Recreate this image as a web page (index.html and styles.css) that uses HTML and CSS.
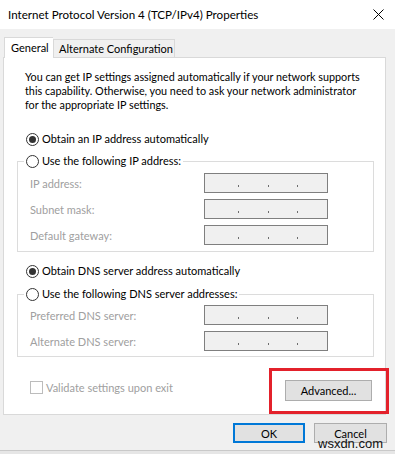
FILE: index.html
```html
<!DOCTYPE html>
<html>
<head>
<meta charset="utf-8">
<link rel="stylesheet" href="styles.css">
</head>
<body>
<div class="dialog">
  <div class="titlebar">
    <span class="title">Internet Protocol Version 4 (TCP/IPv4) Properties</span>
    <svg class="close" width="11" height="11" viewBox="0 0 11 11"><path d="M0.5 0.5 L10.5 10.5 M10.5 0.5 L0.5 10.5" stroke="#000" stroke-width="1"/></svg>
  </div>
  <div class="tabs">
    <div class="tab active">General</div>
    <div class="tab">Alternate Configuration</div>
  </div>
  <div class="panel">
    <p class="intro">You can get IP settings assigned automatically if your network supports this capability. Otherwise, you need to ask your network administrator for the appropriate IP settings.</p>

    <div class="radio-row first"><span class="radio checked"></span><span>Obtain an IP address automatically</span></div>
    <fieldset class="group">
      <legend class="radio-row"><span class="radio"></span><span>Use the following IP address:</span></legend>
      <div class="field"><span class="label">IP address:</span><span class="ipbox"><i></i><i></i><i></i></span></div>
      <div class="field"><span class="label">Subnet mask:</span><span class="ipbox"><i></i><i></i><i></i></span></div>
      <div class="field"><span class="label">Default gateway:</span><span class="ipbox"><i></i><i></i><i></i></span></div>
    </fieldset>

    <div class="radio-row dns"><span class="radio checked"></span><span>Obtain DNS server address automatically</span></div>
    <fieldset class="group group-dns">
      <legend class="radio-row"><span class="radio"></span><span>Use the following DNS server addresses:</span></legend>
      <div class="field"><span class="label">Preferred DNS server:</span><span class="ipbox"><i></i><i></i><i></i></span></div>
      <div class="field"><span class="label">Alternate DNS server:</span><span class="ipbox"><i></i><i></i><i></i></span></div>
    </fieldset>

    <div class="bottom-row">
      <label class="check"><span class="checkbox"></span><span>Validate settings upon exit</span></label>
      <button class="btn advanced">Advanced...</button>
    </div>
  </div>
  <div class="highlight"></div>
  <div class="footer">
    <button class="btn ok">OK</button>
    <button class="btn">Cancel</button>
  </div>
  <div class="bottom-strip"></div>
  <div class="watermark">wsxdn.com</div>
</div>
</body>
</html>
```
FILE: styles.css
```css
* { box-sizing: border-box; }
html, body { margin: 0; padding: 0; }
body {
  width: 395px;
  height: 454px;
  overflow: hidden;
  background: #f0f0f0;
  font-family: Lato, "Open Sans", sans-serif;
  font-size: 11px;
  color: #000;
}
.dialog {
  position: relative;
  width: 395px;
  height: 454px;
}
.titlebar {
  height: 29px;
  background: #fff;
  display: flex;
  align-items: center;
  justify-content: space-between;
  padding: 0 11px 1px 8px;
}
.title {
  font-size: 11.6px;
  color: #000;
}
.close { display: block; }
.tabs {
  display: flex;
  align-items: flex-end;
  padding: 8px 0 0 4px;
  height: 28px;
}
.tab {
  height: 18px;
  border: 1px solid #d9d9d9;
  border-bottom: none;
  padding: 0 5px;
  line-height: 17px;
  background: #f0f0f0;
  width: 122px;
  white-space: nowrap;
}
.tab.active {
  width: 49px;
  background: #fff;
  position: relative;
  z-index: 1;
  margin-bottom: -1px;
  height: 21px;
  padding-left: 6px;
  line-height: 19px;
  border-right: none;
}
.panel {
  margin-left: 3px;
  width: 383px;
  height: 358px;
  background: #fff;
  border: 1px solid #d9d9d9;
}
.intro {
  margin: 0;
  padding: 12px 18px 0 21px;
  line-height: 14px;
  font-size: 10.8px;
}
.radio-row {
  display: flex;
  align-items: center;
  height: 16px;
  line-height: 16px;
  white-space: nowrap;
}
.radio-row.first { margin: 19px 0 0 22px; }
.radio-row.dns { margin: 11px 0 0 22px; }
.radio {
  width: 13px;
  height: 13px;
  border: 1px solid #333;
  border-radius: 50%;
  margin-right: 3px;
  background: #fff;
  display: flex;
  align-items: center;
  justify-content: center;
  flex: none;
}
.radio.checked::after {
  content: "";
  width: 7px;
  height: 7px;
  border-radius: 50%;
  background: #333;
}
.group {
  margin: 6px 11px 0 13px;
  padding: 0 0 6px 6px;
  border: 1px solid #dcdcdc;
  min-width: 0;
}
.group legend {
  padding: 0 2px;
  background: #fff;
}
.group-dns { margin-top: 7px; padding-bottom: 5px; }
.field {
  display: flex;
  align-items: center;
  height: 20px;
  margin-top: 6px;
  color: #a0a0a0;
}
.group .field:first-of-type { margin-top: 4px; }
.group-dns .field:first-of-type { margin-top: 3px; }
.label {
  width: 180px;
  padding-left: 6px;
  flex: none;
}
.ipbox {
  width: 124px;
  height: 20px;
  flex: none;
  border: 1px solid #7f7f7f;
  background: #f0f0f0;
  display: flex;
  justify-content: space-between;
  align-items: flex-end;
  padding: 0 29px 5px 33px;
}
.ipbox i {
  display: block;
  width: 1px;
  height: 2px;
  background: #6d6d6d;
}
.bottom-row {
  display: flex;
  justify-content: space-between;
  align-items: center;
  padding: 23px 13px 0 26px;
}
.check {
  display: flex;
  align-items: center;
  color: #a0a0a0;
  margin-top: -7px;
}
.checkbox {
  width: 13px;
  height: 13px;
  border: 1px solid #bcbcbc;
  background: #fff;
  margin-right: 3px;
}
.btn {
  font-family: inherit;
  font-size: 11px;
  color: #000;
  height: 21px;
  border: 1px solid #adadad;
  background: #e1e1e1;
  padding: 0;
  margin: 0;
}
.advanced { width: 87px; }
.highlight {
  position: absolute;
  left: 269px;
  top: 368px;
  width: 120px;
  height: 46px;
  border: 3px solid #e3212b;
}
.footer {
  display: flex;
  justify-content: flex-end;
  gap: 9px;
  padding: 8px 8px 0 0;
  height: 35px;
}
.footer .btn { width: 73px; height: 20px; }
.btn.ok { border: 2px solid #0078d7; width: 72px; }
.bottom-strip {
  border-top: 1px solid #c9c9c9;
  background: #e6e6e6;
  height: 10px;
}
.watermark {
  position: absolute;
  left: 318px;
  top: 436px;
  font-family: "Liberation Sans", Arial, sans-serif;
  font-size: 13px;
  color: #111;
}
```
